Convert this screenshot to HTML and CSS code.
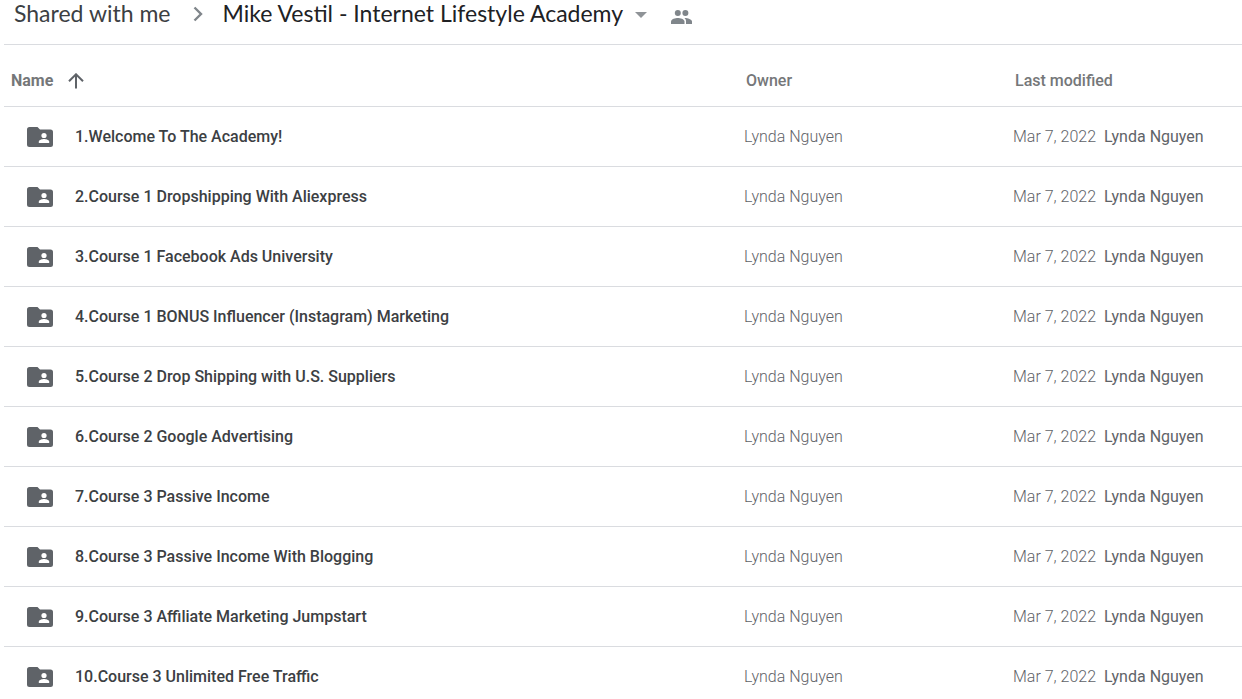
FILE: index.html
```html
<!DOCTYPE html>
<html lang="en">
<head>
<meta charset="utf-8">
<meta name="viewport" content="width=device-width, initial-scale=1">
<title>Mike Vestil - Internet Lifestyle Academy</title>
<link rel="stylesheet" href="styles.css">
</head>
<body>
<svg class="sprite" aria-hidden="true">
  <symbol id="folder" viewBox="0 0 26 20">
    <path fill="currentColor" d="M2.500 0h8l2.500 2.500h10.500A2.500 2.500 0 0 1 26 5v12.500a2.500 2.500 0 0 1-2.500 2.500h-21A2.500 2.500 0 0 1 0 17.500v-15A2.500 2.500 0 0 1 2.500 0z"/>
    <circle cx="17" cy="8.500" r="2.600" fill="#fff"/>
    <path fill="#fff" d="M11.800 16v-1.300c0-1.800 3.500-2.600 5.200-2.600s5.200.8 5.200 2.600V16z"/>
  </symbol>
</svg>
<main class="drive">
  <nav class="crumbs" aria-label="Breadcrumb">
    <a class="crumb" href="#">Shared with me</a>
    <svg class="chevron" viewBox="0 0 10 16" aria-hidden="true"><path d="M1.500 1.500 8 8l-6.500 6.500"/></svg>
    <button class="crumb current" type="button">Mike Vestil - Internet Lifestyle Academy
      <svg class="caret" viewBox="0 0 12 6" aria-hidden="true"><path d="M0 0h12L6 6z"/></svg>
    </button>
    <button class="people" type="button" aria-label="Manage access">
      <svg viewBox="0 0 21 14" aria-hidden="true"><circle cx="6.800" cy="3" r="3"/><path d="M0 14v-2.500C0 9 4.500 8 6.800 8s6.700 1 6.700 3.500V14z"/><circle cx="14.400" cy="3" r="3"/><path d="M13.900 8.100c2.700.1 7.100 1.200 7.100 3.400V14h-6v-2.500c0-1.500-.4-2.600-1.600-3.400z"/></svg>
    </button>
  </nav>
  <table class="files">
    <colgroup><col class="col-name"><col class="col-owner"><col class="col-modified"></colgroup>
    <thead>
      <tr>
        <th class="name-head" aria-sort="ascending"><button class="sort" type="button">Name
          <svg class="arrow" viewBox="0 0 16 16" aria-hidden="true"><path d="M8 15.500V1.500M1 8.300l7-7 7 7"/></svg></button></th>
        <th>Owner</th>
        <th>Last modified</th>
      </tr>
    </thead>
    <tbody>
      <tr><td><div class="file"><svg class="folder" aria-hidden="true"><use href="#folder"/></svg>1.Welcome To The Academy!</div></td><td>Lynda Nguyen</td><td>Mar 7, 2022 <span class="editor">Lynda Nguyen</span></td></tr>
      <tr><td><div class="file"><svg class="folder" aria-hidden="true"><use href="#folder"/></svg>2.Course 1 Dropshipping With Aliexpress</div></td><td>Lynda Nguyen</td><td>Mar 7, 2022 <span class="editor">Lynda Nguyen</span></td></tr>
      <tr><td><div class="file"><svg class="folder" aria-hidden="true"><use href="#folder"/></svg>3.Course 1 Facebook Ads University</div></td><td>Lynda Nguyen</td><td>Mar 7, 2022 <span class="editor">Lynda Nguyen</span></td></tr>
      <tr><td><div class="file"><svg class="folder" aria-hidden="true"><use href="#folder"/></svg>4.Course 1 BONUS Influencer (Instagram) Marketing</div></td><td>Lynda Nguyen</td><td>Mar 7, 2022 <span class="editor">Lynda Nguyen</span></td></tr>
      <tr><td><div class="file"><svg class="folder" aria-hidden="true"><use href="#folder"/></svg>5.Course 2 Drop Shipping with U.S. Suppliers</div></td><td>Lynda Nguyen</td><td>Mar 7, 2022 <span class="editor">Lynda Nguyen</span></td></tr>
      <tr><td><div class="file"><svg class="folder" aria-hidden="true"><use href="#folder"/></svg>6.Course 2 Google Advertising</div></td><td>Lynda Nguyen</td><td>Mar 7, 2022 <span class="editor">Lynda Nguyen</span></td></tr>
      <tr><td><div class="file"><svg class="folder" aria-hidden="true"><use href="#folder"/></svg>7.Course 3 Passive Income</div></td><td>Lynda Nguyen</td><td>Mar 7, 2022 <span class="editor">Lynda Nguyen</span></td></tr>
      <tr><td><div class="file"><svg class="folder" aria-hidden="true"><use href="#folder"/></svg>8.Course 3 Passive Income With Blogging</div></td><td>Lynda Nguyen</td><td>Mar 7, 2022 <span class="editor">Lynda Nguyen</span></td></tr>
      <tr><td><div class="file"><svg class="folder" aria-hidden="true"><use href="#folder"/></svg>9.Course 3 Affiliate Marketing Jumpstart</div></td><td>Lynda Nguyen</td><td>Mar 7, 2022 <span class="editor">Lynda Nguyen</span></td></tr>
      <tr><td><div class="file"><svg class="folder" aria-hidden="true"><use href="#folder"/></svg>10.Course 3 Unlimited Free Traffic</div></td><td>Lynda Nguyen</td><td>Mar 7, 2022 <span class="editor">Lynda Nguyen</span></td></tr>
    </tbody>
  </table>
</main>
</body>
</html>
```
FILE: styles.css
```css
* { box-sizing: border-box; }
body { margin: 0; background: #fff; font-family: Roboto, sans-serif; color: #3c4043; }
button { border: 0; padding: 0; background: none; font: inherit; color: inherit; cursor: pointer; }
.sprite { position: absolute; width: 0; height: 0; }
.drive { padding-left: 4px; height: 100vh; overflow: hidden; }
.crumbs { display: flex; align-items: center; padding: 0 10px 18px; border-bottom: 1px solid #dadce0; }
.crumb { font-family: Lato, sans-serif; font-size: 23px; line-height: 26px; color: #3c4043; text-decoration: none; white-space: nowrap; }
.current { display: flex; align-items: center; gap: 12px; color: #202124; }
.chevron { width: 10px; height: 16px; margin: 2px 20px 0 22px; fill: none; stroke: #80868b; stroke-width: 2.400; }
.caret { width: 12px; height: 6px; margin-top: 4px; fill: #8f9397; }
.people { margin-left: 24px; display: flex; padding-top: 7px; }
.people svg { width: 21px; height: 14px; fill: #80868b; }
.files { width: 100%; border-collapse: separate; border-spacing: 0; table-layout: fixed; font-size: 16px; line-height: 20px; }
.col-owner { width: 269px; }
.col-modified { width: 229px; }
th, td { height: 60px; padding: 0; border-bottom: 1px solid #dadce0; text-align: left; white-space: nowrap; }
th { height: 62px; padding: 10px 0 0 2px; font-weight: 500; color: #757779; }
.name-head { padding-left: 7px; font-weight: 700; }
.sort { display: flex; align-items: center; gap: 15px; }
.arrow { width: 16px; height: 16px; fill: none; stroke: #5f6368; stroke-width: 2; }
td { font-weight: 300; color: #5f6368; }
.file { display: flex; align-items: center; gap: 22px; padding-left: 23px; font-weight: 500; color: #3c4043; }
.folder { width: 26px; height: 20px; color: #5f6368; }
.editor { margin-left: 4px; font-weight: 400; }
```
